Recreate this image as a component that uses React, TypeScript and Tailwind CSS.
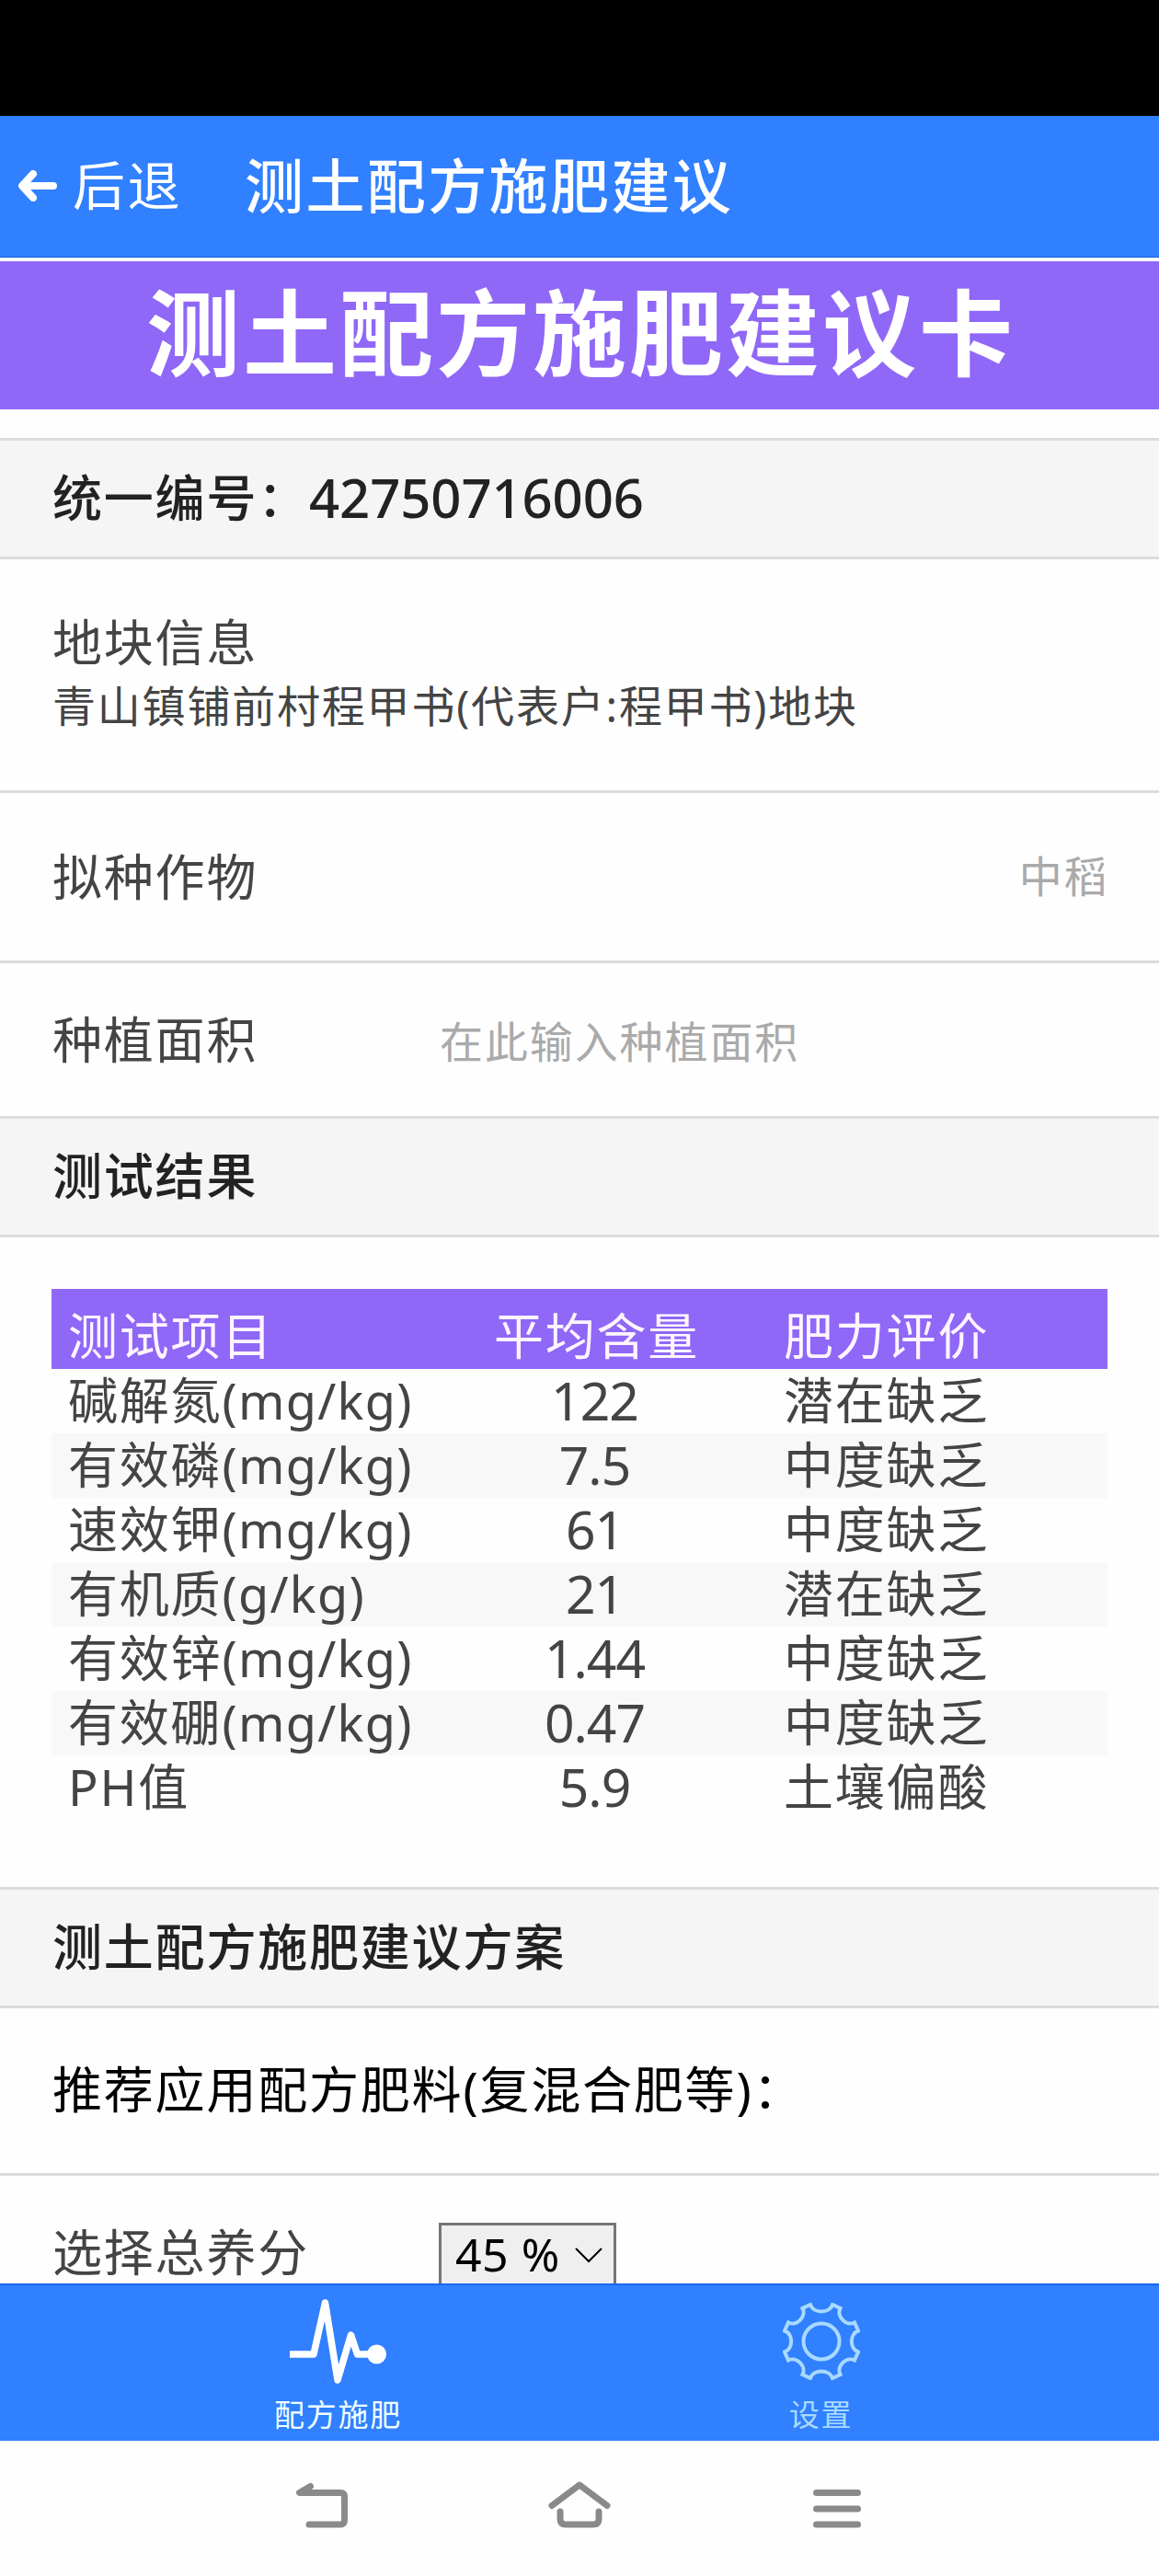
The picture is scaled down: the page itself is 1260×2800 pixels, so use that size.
// Fertilizer recommendation card screen
import React from "react";

const results = [
  { name: "碱解氮", unit: "(mg/kg)", value: "122", level: "潜在缺乏" },
  { name: "有效磷", unit: "(mg/kg)", value: "7.5", level: "中度缺乏" },
  { name: "速效钾", unit: "(mg/kg)", value: "61", level: "中度缺乏" },
  { name: "有机质", unit: "(g/kg)", value: "21", level: "潜在缺乏" },
  { name: "有效锌", unit: "(mg/kg)", value: "1.44", level: "中度缺乏" },
  { name: "有效硼", unit: "(mg/kg)", value: "0.47", level: "中度缺乏" },
  { name: "PH值", unit: "", value: "5.9", level: "土壤偏酸" },
];

const SectionTitle: React.FC<{ children: React.ReactNode }> = ({ children }) => (
  <h2 className="h-[132px] shrink-0 flex items-center px-[57px] pb-[2px] border-y-[3px] border-[#dcdcdc] bg-[#f5f5f5] text-[#222] text-[54px] tracking-[1.8px] font-medium whitespace-nowrap">
    {children}
  </h2>
);

const PulseIcon = () => (
  <svg className="w-[106px] h-[92px]" viewBox="0 0 106 92" fill="none">
    <path
      d="M0 60H26L38.5 4L52 88L66.5 39L73.5 60H94"
      stroke="#fff"
      strokeWidth="7.5"
      strokeLinejoin="round"
    />
    <circle cx="94.5" cy="60" r="10.5" fill="#fff" />
  </svg>
);

const GearIcon = () => (
  <svg className="w-[84px] h-[84px]" viewBox="0 0 84 84" fill="none" stroke="#a9d9ff" strokeWidth="4">
    <circle cx="42" cy="42" r="19.5" />
    <path d="M30 2C33 12 51 12 54 2L62.5 6C58 15 69 26 78 21.5L82 30.5C72.5 34 72.5 50 82 53.5L78 62.5C69 58 58 69 62.5 78L54 82C51 72 33 72 30 82L21.5 78C26 69 15 58 6 62.5L2 53.5C11.5 50 11.5 34 2 30.5L6 21.5C15 26 26 15 21.5 6Z" />
  </svg>
);

export default function App() {
  return (
    <div className="w-[1260px] h-[2800px] flex flex-col overflow-hidden bg-[#fefefe] font-['Noto_Sans','Noto_Sans_CJK_SC',sans-serif] text-[#444] leading-none">
      {/* Status bar */}
      <div className="h-[126px] shrink-0 bg-black" />

      {/* App header */}
      <header className="h-[154px] shrink-0 flex items-center pb-[2px] bg-[#3080ff] border-b border-[#1a5fd0] text-white whitespace-nowrap">
        <svg className="w-[42px] h-[34px] ml-5" viewBox="0 0 42 34" fill="none" stroke="#fff" strokeWidth="8" strokeLinecap="round" strokeLinejoin="round">
          <path d="M16 4L4 17L16 30M5 17H38" />
        </svg>
        <span className="ml-[17px] text-[57px] tracking-[2.5px]">后退</span>
        <h1 className="ml-[68px] text-[64px] tracking-[2.4px] font-medium">测土配方施肥建议</h1>
      </header>

      <div className="h-[161px] shrink-0 mt-1 mb-[31px] flex items-center justify-center pl-[3px] pb-[6px] bg-[#8f68f7] text-white text-[102px] tracking-[3px] font-bold whitespace-nowrap">
        测土配方施肥建议卡
      </div>

      <main className="h-[2006px] shrink-0 overflow-hidden">
        <SectionTitle>
          统一编号：<span className="text-[58px] tracking-[-0.1px]">42750716006</span>
        </SectionTitle>

        {/* Plot info */}
        <div className="h-[254px] border-b-[3px] border-[#dcdcdc] px-[57px] pt-[62px] whitespace-nowrap">
          <p className="text-[54px] leading-[56px] tracking-[1.8px]">地块信息</p>
          <p className="mt-[11px] text-[47px] leading-[60px] tracking-[1.8px]">青山镇铺前村程甲书(代表户:程甲书)地块</p>
        </div>

        <div className="h-[185px] border-b-[3px] border-[#dcdcdc] px-[57px] flex items-center justify-between">
          <span className="text-[54px] tracking-[1.8px]">拟种作物</span>
          <span className="-mr-[2px] pb-[2px] text-[47px] tracking-[1.6px] text-[#aaa]">中稻</span>
        </div>

        <div className="h-[166px] px-[57px] flex items-center">
          <span className="w-[421px] text-[54px] tracking-[1.8px]">种植面积</span>
          <span className="pt-[4px] text-[47px] tracking-[1.9px] text-[#aaa]">在此输入种植面积</span>
        </div>

        <SectionTitle>测试结果</SectionTitle>

        {/* Soil test results */}
        <div className="h-[706px] px-14 pt-14 text-[54px] tracking-[1.8px] whitespace-nowrap">
          <div className="h-[87px] pt-[15px] flex items-center bg-[#8f68f7] text-[#fff5ff]">
            <span className="w-[376px] pl-[18px]">测试项目</span>
            <span className="w-[433px] text-center">平均含量</span>
            <span className="-ml-[13px]">肥力评价</span>
          </div>
          {results.map((row) => (
            <div key={row.name} className="h-[70px] pb-[2px] flex items-center odd:bg-[#f8f8f8]">
              <span className="w-[376px] pl-[18px]">
                {row.name}
                <span className="tracking-[1.3px]">{row.unit}</span>
              </span>
              <span className="w-[433px] pr-[4px] text-center text-[57px] tracking-[-1px]">{row.value}</span>
              <span className="-ml-[13px]">{row.level}</span>
            </div>
          ))}
        </div>

        <SectionTitle>测土配方施肥建议方案</SectionTitle>

        <div className="h-[182px] px-[57px] pb-[3px] flex items-center border-b-[3px] border-[#dcdcdc] text-black text-[54px] tracking-[1.8px] whitespace-nowrap">
          推荐应用配方肥料(复混合肥等)：
        </div>

        <div className="px-[57px] pt-[51px] flex items-start">
          <span className="w-[420px] pt-[5px] text-[54px] tracking-[1.8px]">选择总养分</span>
          <div className="w-[193px] h-[80px] flex items-start pt-[6px] pl-[15px] border-[3px] border-[#767676] bg-[#efefef] text-black">
            <span className="text-[50px] tracking-[0.5px]">45 %</span>
            <svg className="w-[30px] h-[17px] ml-[16px] mt-[18px]" viewBox="0 0 30 17" fill="none" stroke="#000" strokeWidth="2">
              <path d="M1 1L15 15L29 1" />
            </svg>
          </div>
        </div>
      </main>

      {/* Bottom tabs */}
      <nav className="h-[171px] shrink-0 px-[105px] flex bg-[#3080ff] border-t-2 border-[#1a68f0]">
        <div className="flex-1 flex flex-col items-center pt-[15px] text-[#efffff]">
          <PulseIcon />
          <span className="mt-[17px] text-[33px] tracking-[1.8px]">配方施肥</span>
        </div>
        <div className="flex-1 flex flex-col items-center pt-[19px] text-[#a9d9ff]">
          <GearIcon />
          <span className="mt-[21px] text-[33px] tracking-[1.8px]">设置</span>
        </div>
      </nav>

      {/* System navigation */}
      <div className="flex-1 px-[315px] pt-[39px] flex justify-between">
        <svg className="w-[70px] h-[60px]" viewBox="0 0 70 60" fill="none" stroke="#8a8a8a" strokeWidth="7" strokeLinecap="round" strokeLinejoin="round">
          <path d="M22.5 10.5L10.5 17.5H55Q59.5 17.5 59.5 22V47Q59.5 52 55 52H21" />
        </svg>
        <svg className="w-[70px] h-[60px]" viewBox="0 0 70 60" fill="none" stroke="#8a8a8a" strokeWidth="7" strokeLinecap="round" strokeLinejoin="round">
          <path d="M5 31.5L35 9L65 31.5M14 38V46Q14 52 20 52H50Q56 52 56 46V38" />
        </svg>
        <svg className="w-[70px] h-[60px]" viewBox="0 0 70 60" fill="none" stroke="#8a8a8a" strokeWidth="7" strokeLinecap="round">
          <path d="M12.5 17.5H57.5M12.5 35H57.5M12.5 52H57.5" />
        </svg>
      </div>
    </div>
  );
}
